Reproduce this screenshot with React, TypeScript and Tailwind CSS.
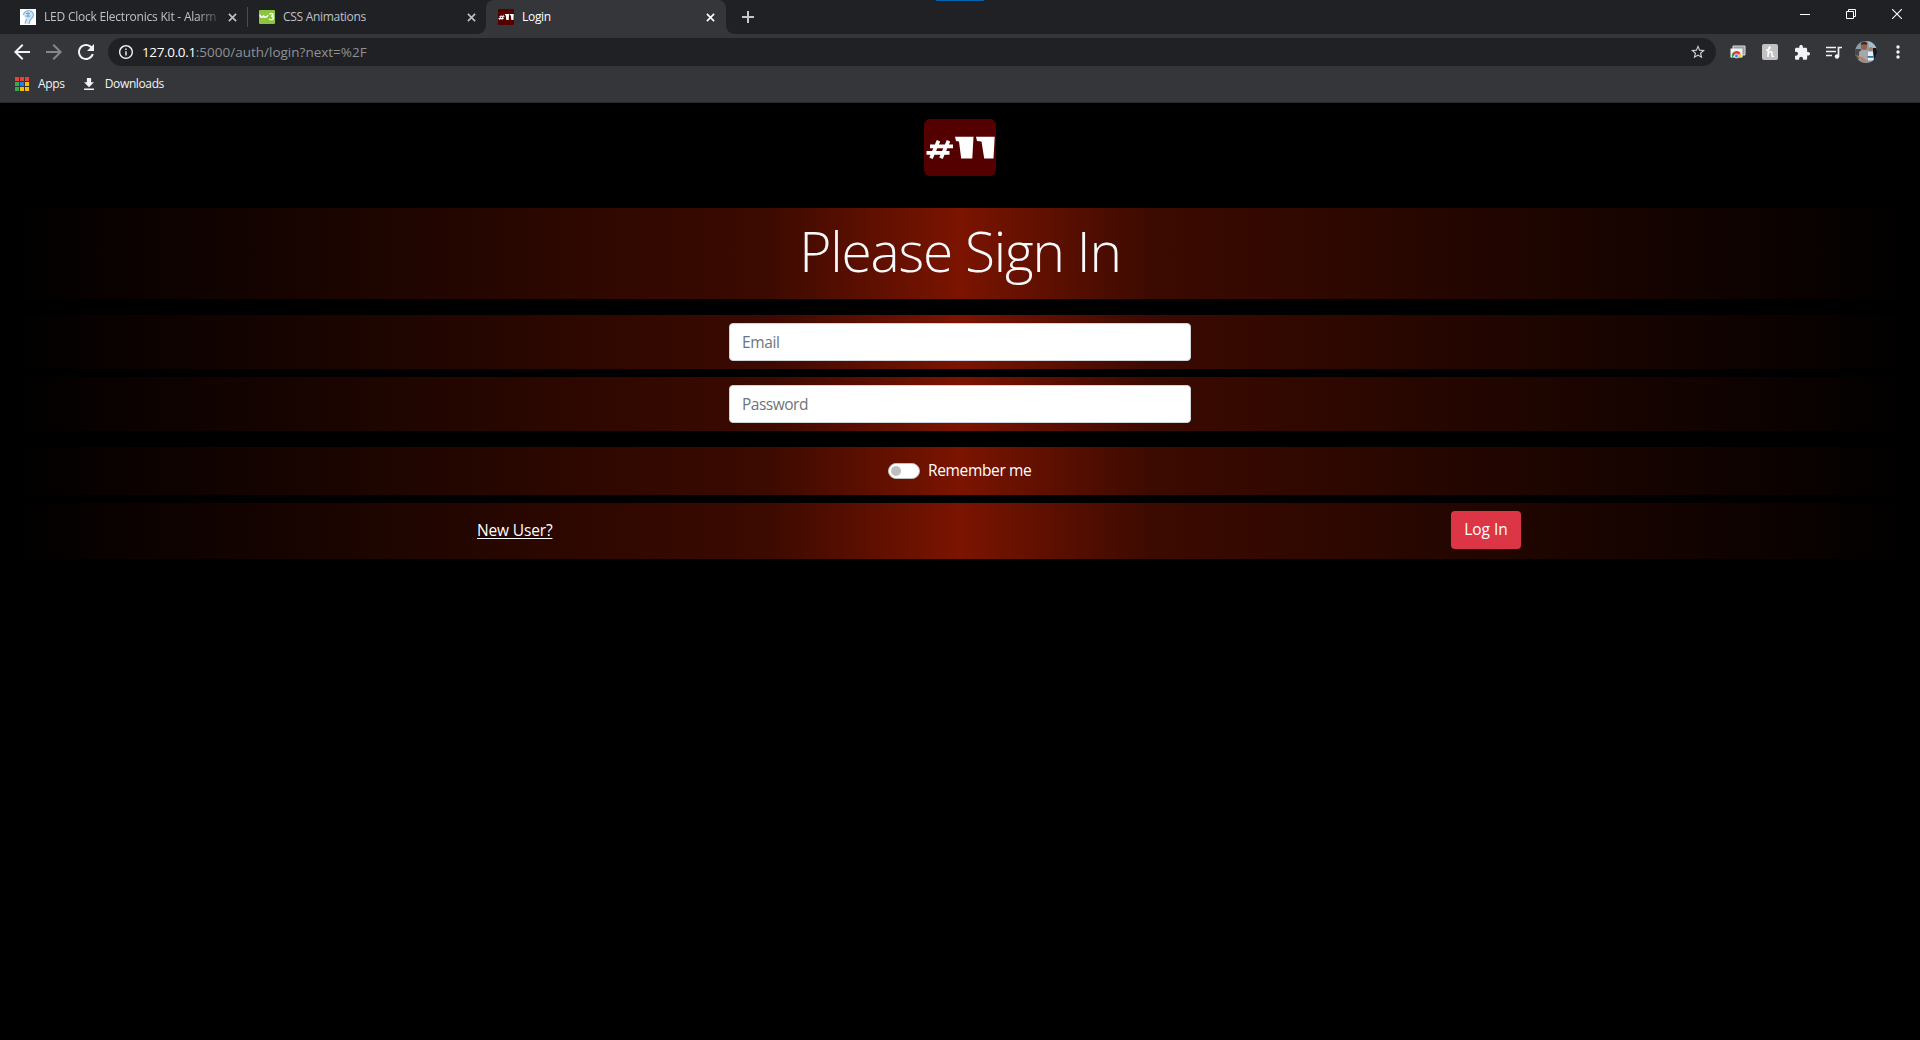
import React from "react";

const band =
  "flex w-full bg-[linear-gradient(90deg,#000000_0%,#3c0a00_40%,#7b1400_50%,#3c0a00_60%,#000000_100%)]";

function CloseIcon({ className }: { className: string }) {
  return (
    <svg viewBox="0 0 10 10" className={className} fill="none" stroke="currentColor" strokeWidth="1.8">
      <path d="M1 1l8 8M9 1L1 9" />
    </svg>
  );
}

function BrandMark({ className, rx }: { className: string; rx: number }) {
  return (
    <svg viewBox="0 0 72 57" preserveAspectRatio="none" className={className}>
      <rect width="72" height="57" rx={rx} fill="#550000" />
      <g fill="#fff">
        <path d="M31 17.700h18.500l-1.200 21.800H37.200L35 22.500l-3-.5z" />
        <path d="M52 17.700h18.700l-1.200 21.800h-9.300L57.500 22.500l-4.500-.5z" />
      </g>
      <path d="M14.500 21.700L7 39.300M24.500 21.700L17 39.300M6 27.300h23M2.500 33.800h23" stroke="#fff" strokeWidth="3.700" fill="none" />
    </svg>
  );
}

function TabStrip() {
  return (
    <div className="flex h-[34px] bg-[#202124] text-[12px] text-[#bdc1c6]">
      <div className="flex w-[247px] items-center pl-5">
        <svg viewBox="0 0 16 16" className="h-4 w-4 shrink-0">
          <rect width="16" height="16" fill="#fff" />
          <path d="M3 6c0-3 3-5 6.500-4.500C13 2 14 5 13.500 8L10 11l-1 4-4-.5 1-4-1-2z" fill="#d3e6f5" />
          <path d="M3.500 6c0-3 3-4.500 6-4.200 3.500.5 4.500 3.500 3.500 6.200l-3 3-1 4" fill="none" stroke="#7db2de" strokeWidth="1.100" />
          <path d="M6 4.500h4M5.500 7h5M8 3v5.500M6.500 10L5 14.500" stroke="#5c9bd3" strokeWidth=".9" />
        </svg>
        <span className="ml-2 w-[174px] overflow-hidden whitespace-nowrap tracking-[-0.22px] [mask-image:linear-gradient(90deg,#000_88%,rgba(0,0,0,0.25)_99%)]">
          LED Clock Electronics Kit - Alarm
        </span>
        <CloseIcon className="ml-[10px] h-[9px] w-[9px] shrink-0" />
      </div>
      <div className="mt-[7px] h-5 w-px bg-[#4a4c50]" />
      <div className="flex w-[238px] items-center pl-[11px]">
        <svg viewBox="0 0 16 16" className="h-4 w-4 shrink-0">
          <rect width="16" height="14" y="1" rx="1" fill="#8bc53f" />
          <path d="M1 5.500c0 3.500 3 3.500 3.500 1 .5 2.500 3.500 2.500 4.500-.5M10.500 5c2-1 4-.5 3.500 1-.3 1-1.500 1.200-2 1.200 2.500 0 3 1.600 2 2.800-1 1-3 .8-4 0" fill="none" stroke="#fff" strokeWidth="1.400" />
        </svg>
        <span className="ml-2 grow tracking-[-0.3px]">CSS Animations</span>
        <CloseIcon className="mr-[10px] h-[9px] w-[9px]" />
      </div>
      <div className="relative flex w-[240px] items-center rounded-t-lg bg-[#35363a] pl-3 text-white">
        <span className="absolute bottom-0 -left-2 h-2 w-2 bg-[radial-gradient(circle_at_0_0,transparent_7.500px,#35363a_8px)]" />
        <span className="absolute -right-2 bottom-0 h-2 w-2 bg-[radial-gradient(circle_at_100%_0,transparent_7.500px,#35363a_8px)]" />
        <BrandMark className="h-4 w-4" rx={4} />
        <span className="ml-2 grow tracking-[-0.3px]">Login</span>
        <CloseIcon className="mr-[11px] h-[9px] w-[9px]" />
      </div>
      <svg viewBox="0 0 12 12" className="mt-[11px] ml-4 h-3 w-3" stroke="#c5c8cb" strokeWidth="2">
        <path d="M6 0v12M0 6h12" />
      </svg>
      <div className="ml-[182px] h-px w-12 bg-[#0063b1]" />
      <div className="ml-auto flex text-white">
        <svg viewBox="0 0 10 10" className="mt-[9px] h-[10px] w-[10px]" stroke="#fff">
          <path d="M0 5.500h10" />
        </svg>
        <svg viewBox="0 0 10 10" className="mt-[9px] ml-9 h-[10px] w-[10px]" fill="none" stroke="#fff">
          <path d="M.5 2.500h7v7h-7zM2.500 2.500v-2h7v7h-2" />
        </svg>
        <svg viewBox="0 0 10 10" className="mt-[9px] mr-[18px] ml-9 h-[10px] w-[10px]" stroke="#fff" strokeWidth="1.100">
          <path d="M0 0l10 10M10 0L0 10" />
        </svg>
      </div>
    </div>
  );
}

function AddressBar() {
  return (
    <div className="flex h-[36px] items-center bg-[#35363a] text-[#f1f3f4]">
      <svg viewBox="4 4 16 16" className="ml-[14px] h-4 w-4" fill="#f1f3f4">
        <path d="M20 11H7.830l5.590-5.590L12 4l-8 8 8 8 1.410-1.410L7.830 13H20v-2z" />
      </svg>
      <svg viewBox="4 4 16 16" className="ml-4 h-4 w-4" fill="#86878a">
        <path d="M12 4l-1.410 1.410L16.170 11H4v2h12.170l-5.580 5.590L12 20l8-8z" />
      </svg>
      <svg viewBox="4 4 16 16" className="ml-4 h-4 w-4" fill="#f1f3f4">
        <path d="M17.650 6.350C16.200 4.900 14.210 4 12 4c-4.420 0-7.990 3.580-7.990 8s3.570 8 7.990 8c3.730 0 6.840-2.550 7.730-6h-2.080c-.82 2.330-3.040 4-5.650 4-3.310 0-6-2.690-6-6s2.690-6 6-6c1.660 0 3.140.69 4.220 1.780L13 11h7V4l-2.350 2.350z" />
      </svg>
      <div className="ml-[14px] flex h-7 w-[1608px] items-center rounded-full bg-[#202124] pl-[11px]">
        <svg viewBox="2 2 20 20" className="h-[14px] w-[14px]" fill="#f1f3f4">
          <path d="M11 7h2v2h-2zm0 4h2v6h-2zm1-9C6.480 2 2 6.480 2 12s4.480 10 10 10 10-4.480 10-10S17.520 2 12 2zm0 18c-4.410 0-8-3.590-8-8s3.590-8 8-8 8 3.590 8 8-3.590 8-8 8z" />
        </svg>
        <span className="ml-[9px] text-[13.5px] tracking-[-0.35px] text-white">127.0.0.1</span>
        <span className="grow text-[13.5px] text-[#8e9195]">:5000/auth/login?next=%2F</span>
        <svg viewBox="2 2 20 20" className="mr-[11px] h-[14px] w-[14px]" fill="#d2d4d6">
          <path d="M22 9.240l-7.190-.62L12 2 9.190 8.630 2 9.240l5.460 4.730L5.820 21 12 17.270 18.180 21l-1.630-7.030L22 9.240zM12 15.400l-3.760 2.270 1-4.280-3.320-2.880 4.380-.38L12 6.100l1.710 4.040 4.380.38-3.320 2.880 1 4.280L12 15.400z" />
        </svg>
      </div>
      <svg viewBox="0 0 16 14" className="ml-[14px] h-[14px] w-4">
        <path d="M3 1h12v9H3z" fill="#9b9d9f" stroke="#dcdcdc" />
        <path d="M.5 3.500h12v9H.5z" fill="#f1f1f1" />
        <path d="M2.200 12.500a4.500 4.500 0 0 1 1-5.200L5 10z" fill="#2ea44f" />
        <path d="M2.300 9a4.600 4.600 0 0 1 8.200-1l-3 2.500z" fill="#e33b2e" />
        <path d="M10.300 8a4.500 4.500 0 0 1 .5 4.500H7z" fill="#fbc116" />
        <circle cx="6.500" cy="11" r="2" fill="#4285f4" stroke="#fff" strokeWidth=".7" />
      </svg>
      <svg viewBox="0 0 16 16" className="ml-4 h-4 w-4">
        <rect width="16" height="16" rx="2" fill="#c1c1c1" />
        <path d="M4 6C6.500 6.500 8.500 4.500 8 3.300 7.300 2.300 6 4 6 13M6 10.500c1-3 4-4 4-1.500 0 2-.5 4.500 2 3.200" fill="none" stroke="#fff" strokeWidth="1.500" />
      </svg>
      <svg viewBox="2 1.500 21 20.500" className="ml-[17px] h-[15px] w-[15px]" fill="#f1f3f4">
        <path d="M20.500 11H19V7c0-1.100-.9-2-2-2h-4V3.500C13 2.120 11.880 1 10.500 1S8 2.120 8 3.500V5H4c-1.100 0-1.990.9-1.990 2v3.800H3.500c1.490 0 2.700 1.210 2.700 2.700s-1.210 2.700-2.700 2.700H2V20c0 1.100.9 2 2 2h3.800v-1.500c0-1.490 1.210-2.700 2.700-2.700 1.490 0 2.700 1.210 2.700 2.700V22H17c1.100 0 2-.9 2-2v-4h1.500c1.380 0 2.500-1.120 2.500-2.500S21.880 11 20.500 11z" />
      </svg>
      <svg viewBox="0 0 16 13" className="ml-4 h-[13px] w-4" fill="none" stroke="#f1f3f4" strokeWidth="1.700">
        <path d="M0 1.500h10M0 5.500h10M0 9.500h6M12.500 10.500v-9h3.500" />
        <circle cx="11" cy="10.500" r="2.200" fill="#f1f3f4" stroke="none" />
      </svg>
      <svg viewBox="0 0 22 22" className="ml-[13px] h-[22px] w-[22px] overflow-hidden rounded-full">
        <rect width="22" height="22" fill="#8e9ba6" />
        <path d="M0 8h6v10H0z" fill="#4b4746" />
        <path d="M13 0h9v7h-8z" fill="#a9bccb" />
        <path d="M18 7h4v13h-4z" fill="#15191d" />
        <path d="M6 4c0-4 6-4 6 0v3c-1 3-5 3-6 0z" fill="#94634f" />
        <path d="M5.500 3.500c1-4 6.500-4 7 0z" fill="#3a2a25" />
        <path d="M4 11c3-3 7-3 10 0v8H4z" fill="#a4a8aa" />
        <path d="M1 14l6 2 6 4-5 2z" fill="#b18472" />
        <circle cx="16" cy="8" r="2" fill="#a97b66" />
        <path d="M13 10.500h5l1 9h-6z" fill="#e8eef2" />
        <path d="M12.500 15h6v1.800h-6z" fill="#2779a8" />
      </svg>
      <svg viewBox="0 0 4 14" className="ml-[19px] h-[14px] w-1" fill="#f1f3f4">
        <circle cx="2" cy="2" r="1.700" />
        <circle cx="2" cy="7" r="1.700" />
        <circle cx="2" cy="12" r="1.700" />
      </svg>
    </div>
  );
}

const appColors = [
  "bg-[#ea4335]", "bg-[#ea4335]", "bg-[#ea4335]",
  "bg-[#34a853]", "bg-[#1a84e8]", "bg-[#fbbc04]",
  "bg-[#34a853]", "bg-[#fbbc04]", "bg-[#fbbc04]",
];

function BookmarksBar() {
  return (
    <div className="flex h-[33px] items-center border-b border-[#28292c] bg-[#35363a] pb-[4px] pl-[15px] text-[12px] text-[#f1f3f4]">
      <div className="grid grid-cols-3 gap-[1.5px]">
        {appColors.map((c, i) => (
          <span key={i} className={`h-[3.5px] w-[3.5px] ${c}`} />
        ))}
      </div>
      <span className="ml-[9.5px] -mt-px tracking-[-0.3px]">Apps</span>
      <svg viewBox="5 3 14 17" className="ml-[19px] h-3 w-[10px]" fill="#f1f3f4">
        <path d="M19 9h-4V3H9v6H5l7 7 7-7zM5 18v2h14v-2H5z" />
      </svg>
      <span className="-mt-px ml-[11px] tracking-[-0.38px]">Downloads</span>
    </div>
  );
}

export default function App() {
  return (
    <div className="flex h-[1040px] w-[1920px] flex-col overflow-hidden bg-black font-['Open_Sans','Noto_Sans',sans-serif]">
      <TabStrip />
      <AddressBar />
      <BookmarksBar />
      <main className="flex flex-col text-[15.5px] text-white">
        <BrandMark className="mt-4 mb-8 h-[57px] w-[72px] self-center" rx={6} />
        <div className={`${band} h-[91px] items-center justify-center pb-[6px]`}>
          <h1 className="text-[55px] leading-none font-light tracking-[-1.2px] text-[#f8f9fa]">Please Sign In</h1>
        </div>
        <div className={`${band} mt-4 h-[54px] items-center justify-center`}>
          <input
            type="email"
            placeholder="Email"
            className="h-[38px] w-[462px] rounded border border-[#ced4da] bg-white px-3 tracking-[-0.4px] placeholder:text-[#6c757d]"
          />
        </div>
        <div className={`${band} mt-2 h-[54px] items-center justify-center`}>
          <input
            type="password"
            placeholder="Password"
            className="h-[38px] w-[462px] rounded border border-[#ced4da] bg-white px-3 tracking-[-0.5px] placeholder:text-[#6c757d]"
          />
        </div>
        <div className={`${band} mt-4 h-[48px] items-center pl-[888px]`}>
          <span className="flex h-4 w-8 items-center rounded-full border border-[#bfbfbf] bg-white pl-[2px]">
            <span className="h-[10px] w-[10px] rounded-full bg-[#bfbfbf]" />
          </span>
          <span className="ml-2 tracking-[-0.35px]">Remember me</span>
        </div>
        <div className={`${band} mt-2 h-[56px] items-start pt-2 pl-[477px]`}>
          <a href="#" className="w-[76px] leading-[38px] whitespace-nowrap tracking-[-0.15px] underline underline-offset-2">
            New User?
          </a>
          <button className="ml-[898px] h-[38px] w-[70px] rounded bg-[#dc3545] whitespace-nowrap">
            Log In
          </button>
        </div>
      </main>
    </div>
  );
}
